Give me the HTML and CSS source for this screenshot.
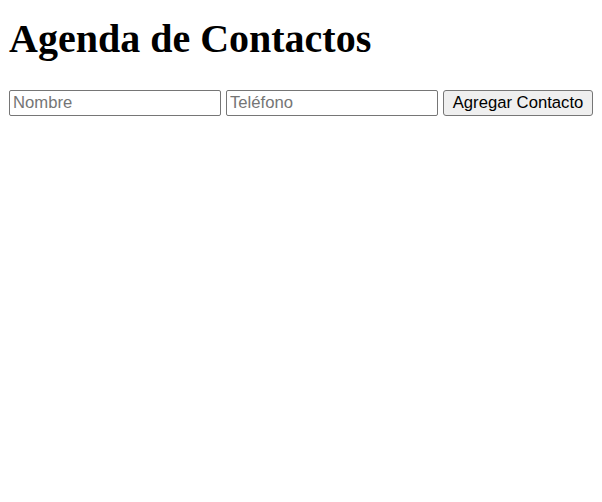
FILE: index.html
```html
<!DOCTYPE html>
<html lang="es">
<head>
<meta charset="utf-8">
<title>Agenda de Contactos</title>
<link rel="stylesheet" href="styles.css">
</head>
<body>
<h1 class="title">Agenda de Contactos</h1>
<form class="form"><input class="field" type="text" placeholder="Nombre"><input class="field" type="text" placeholder="Teléfono"><button class="btn" type="button">Agregar Contacto</button></form>
<ul class="list"></ul>
</body>
</html>
```
FILE: styles.css
```css
html, body {
  background: #fff;
}
body {
  margin: 0 9px;
  padding-top: 16px;
  font-family: "Liberation Serif", serif;
}
.title {
  font-family: "Liberation Serif", serif;
  font-size: 40px;
  font-weight: bold;
  line-height: 46px;
  margin: 0 0 28px;
}
.form {
  margin: 0;
  display: flex;
  gap: 5px;
  align-items: center;
}
.field, .btn {
  font-family: "Liberation Sans", Arial, sans-serif;
  font-size: 16.67px;
  box-sizing: border-box;
  height: 26px;
  margin: 0;
  color: #000;
}
.field {
  width: 212px;
  border: 1px solid #767676;
  border-radius: 2px;
  padding: 1px 3px;
  background: #fff;
}
.field::placeholder {
  color: #757575;
}
.btn {
  width: 150px;
  border: 1px solid #767676;
  border-radius: 3px;
  background: #efefef;
  padding: 1px 6px;
}
.list {
  margin: 16px 0;
  padding: 0;
}
```
